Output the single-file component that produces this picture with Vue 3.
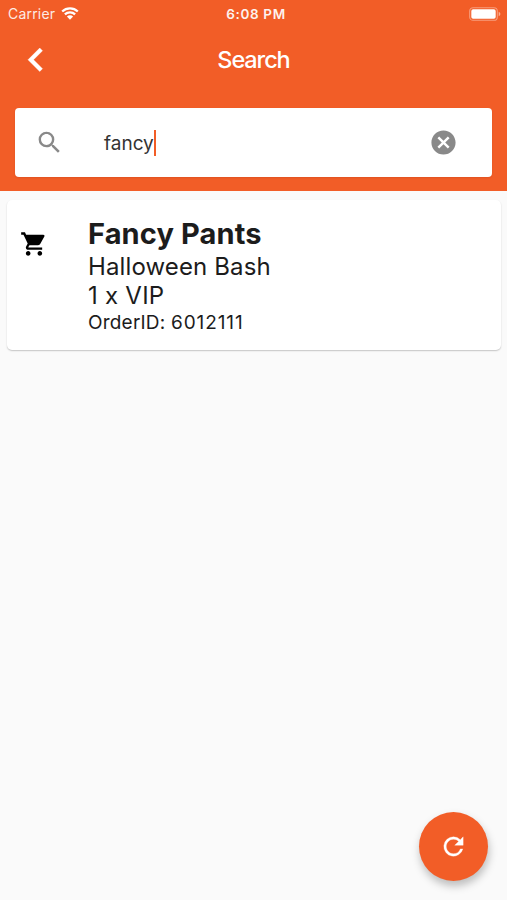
<script setup>
import { ref } from 'vue'

const query = ref('fancy')
const orders = [
  { id: '6012111', name: 'Fancy Pants', event: 'Halloween Bash', ticket: '1 x VIP' }
]
</script>

<template>
  <div class="screen">
    <header class="header">
      <div class="status">
        <div class="carrier">
          <span class="carrier-name">Carrier</span>
          <svg class="wifi" viewBox="0 0 18 13">
            <path d="M1.2 4.5a11.3 11.3 0 0 1 15.6 0M3.9 7.4a7.4 7.4 0 0 1 10.2 0" fill="none" stroke="#fff" stroke-width="2.3" />
            <path d="M9 12.7 5.9 9.6a4.4 4.4 0 0 1 6.2 0z" fill="#fff" />
          </svg>
        </div>
        <span class="time">6:08 PM</span>
        <svg class="battery" viewBox="0 0 32 14">
          <rect x="0.7" y="0.7" width="27.6" height="12.6" rx="3.4" fill="none" stroke="#fff" stroke-opacity=".4" stroke-width="1.1" />
          <rect x="2.3" y="2.3" width="24.4" height="9.4" rx="1.8" fill="#fff" />
          <path d="M29.7 4.8c2.2.8 2.2 3.6 0 4.4z" fill="#fff" fill-opacity=".5" />
        </svg>
      </div>
      <div class="navbar">
        <svg class="back" viewBox="8 6 7.41 12"><path d="M15.41 7.41 14 6l-6 6 6 6 1.41-1.41L10.83 12z" /></svg>
        <h1 class="title">Search</h1>
      </div>
      <div class="search">
        <svg class="icon search-icon" viewBox="0 0 24 24"><path d="M15.5 14h-.79l-.28-.27A6.471 6.471 0 0 0 16 9.5 6.5 6.5 0 1 0 9.5 16c1.61 0 3.09-.59 4.23-1.57l.27.28v.79l5 4.99L20.49 19l-4.99-5zm-6 0C7.01 14 5 11.99 5 9.5S7.01 5 9.5 5 14 7.01 14 9.5 11.99 14 9.5 14z" /></svg>
        <div class="field"><span class="query">{{ query }}</span><span class="caret"></span></div>
        <svg class="icon clear" viewBox="0 0 24 24"><path d="M12 2C6.47 2 2 6.47 2 12s4.47 10 10 10 10-4.47 10-10S17.53 2 12 2zm5 13.59L15.59 17 12 13.41 8.41 17 7 15.59 10.59 12 7 8.41 8.41 7 12 10.59 15.59 7 17 8.41 13.41 12 17 15.59z" /></svg>
      </div>
    </header>

    <main class="results">
      <article v-for="order in orders" :key="order.id" class="card">
        <svg class="icon cart" viewBox="0 0 24 24"><path d="M7 18c-1.1 0-1.99.9-1.99 2S5.9 22 7 22s2-.9 2-2-.9-2-2-2zM1 2v2h2l3.6 7.59-1.35 2.45c-.16.28-.25.61-.25.96 0 1.1.9 2 2 2h12v-2H7.42c-.14 0-.25-.11-.25-.25l.03-.12.9-1.63h7.45c.75 0 1.41-.41 1.75-1.03l3.58-6.49A1.003 1.003 0 0 0 20 4H5.21l-.94-2H1zm16 16c-1.1 0-1.99.9-1.99 2s.89 2 1.99 2 2-.9 2-2-.9-2-2-2z" /></svg>
        <div class="details">
          <div class="name"><span>{{ order.name }}</span></div>
          <div class="event"><span>{{ order.event }}</span></div>
          <div class="ticket"><span>{{ order.ticket }}</span></div>
          <div class="order">OrderID: <span class="order-id">{{ order.id }}</span></div>
        </div>
      </article>
    </main>

    <button class="fab" aria-label="Refresh">
      <svg class="icon" viewBox="0 0 24 24"><path d="M17.65 6.35A7.958 7.958 0 0 0 12 4a8 8 0 1 0 7.73 10h-2.08A5.99 5.99 0 0 1 12 18c-3.31 0-6-2.69-6-6s2.69-6 6-6c1.66 0 3.14.69 4.22 1.78L13 11h7V4l-2.35 2.35z" /></svg>
    </button>
  </div>
</template>

<style>
body {
  margin: 0;
  background: #fafafa;
}
</style>

<style scoped>
.screen {
  height: 900px;
  overflow: hidden;
  background: #fafafa;
  color: #1c1c1c;
  font-family: Inter, "Liberation Sans", sans-serif;
}
.header {
  box-sizing: border-box;
  height: 191px;
  background: #f25d27;
  color: #fff;
}
.status {
  display: grid;
  grid-template-columns: 1fr auto 1fr;
  align-items: center;
  height: 27px;
  padding: 0 6px 0 8px;
}
.carrier {
  display: flex;
  align-items: center;
  gap: 6px;
}
.carrier-name {
  font-size: 14px;
  letter-spacing: 0.2px;
  opacity: 0.88;
}
.wifi {
  width: 18px;
  height: 13px;
}
.time {
  font-size: 13.5px;
  font-weight: 600;
  letter-spacing: 0.65px;
  padding-left: 3px;
  opacity: 0.92;
}
.battery {
  justify-self: end;
  width: 32px;
  height: 14px;
}
.navbar {
  display: grid;
  grid-template-columns: 28px 1fr 28px;
  align-items: center;
  height: 66px;
}
.back {
  width: 14.5px;
  height: 23.5px;
  margin-left: 28px;
  fill: #fff;
  stroke: #fff;
  stroke-width: 0.2;
  stroke-linejoin: round;
  overflow: visible;
}
.title {
  margin: 0;
  padding-bottom: 2px;
  text-align: center;
  font-size: 23.5px;
  font-weight: 500;
  letter-spacing: -1.1px;
}
.search {
  box-sizing: border-box;
  display: flex;
  align-items: center;
  height: 69px;
  margin: 15px 15px 0;
  padding: 0 34px 0 20px;
  border-radius: 4px;
  background: #fff;
  box-shadow: 0 1px 2px rgba(120, 30, 0, 0.15);
}
.icon {
  display: block;
  flex: none;
  width: 29px;
  height: 29px;
}
.search-icon,
.clear {
  fill: #898989;
}
.field {
  display: flex;
  align-items: center;
  flex: 1;
  margin-left: 40px;
  color: #333;
  font-size: 19px;
}
.query {
  padding-top: 1px;
}
.caret {
  width: 2px;
  height: 26px;
  background: #f25d27;
}
.results {
  padding: 9px 6px 0 7px;
}
.card {
  box-sizing: border-box;
  display: flex;
  height: 150px;
  padding: 17px 13px 0;
  border-radius: 5px;
  background: #fff;
  box-shadow: 0 1px 1.5px rgba(0, 0, 0, 0.22);
}
.cart {
  width: 28px;
  height: 28px;
  margin-top: 13px;
  fill: #000;
}
.details {
  margin-left: 40px;
  white-space: nowrap;
}
.name {
  font-size: 29px;
  font-weight: 700;
  line-height: 34px;
  letter-spacing: 0.12px;
}
.event,
.ticket {
  font-size: 24px;
  line-height: 30px;
  letter-spacing: 0.12px;
}
.event {
  padding-top: 1px;
  line-height: 29px;
}
.ticket {
  letter-spacing: 0.25px;
}
.order {
  font-size: 19px;
  line-height: 23px;
  letter-spacing: 0.2px;
}
.order-id {
  letter-spacing: 0.9px;
}
.fab {
  position: absolute;
  left: 419px;
  top: 812px;
  display: flex;
  align-items: center;
  justify-content: center;
  width: 69px;
  height: 69px;
  padding: 0;
  border: 0;
  border-radius: 50%;
  background: #f25d27;
  box-shadow: 1px 5px 9px rgba(0, 0, 0, 0.25);
}
.fab .icon {
  fill: #fff;
  stroke: #fff;
  stroke-width: 0.25;
}
</style>
